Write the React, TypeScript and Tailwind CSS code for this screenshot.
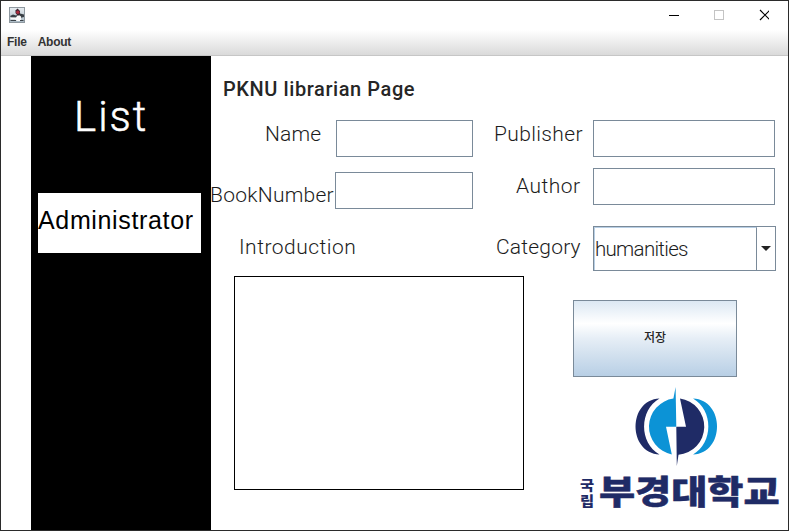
import React from "react";

function JavaIcon() {
  return (
    <svg width="16" height="16" viewBox="0 0 16 16" className="block">
      <defs>
        <linearGradient id="cup" x1="0" y1="0" x2="0" y2="1">
          <stop offset="0" stopColor="#e8edf1" />
          <stop offset="1" stopColor="#a9b8c3" />
        </linearGradient>
      </defs>
      <rect x="0.5" y="0.5" width="15" height="15" fill="url(#cup)" stroke="#8e989f" />
      <path d="M1 9L4 7.5L7 8.5L11 6.5L15 7.5V10L11 11L2 10.500Z" fill="#3a4046" />
      <path d="M1.500 10.500H7L9 7.500L12 9.500V14H8L6 12.500H1.500Z" fill="#fafafa" />
      <path d="M1.500 13.500H7M11 13.500H14.500" stroke="#3b4248" strokeWidth="1" />
      <path d="M8.500 1.500L11 4V7L9 9L6.500 6V3.500Z" fill="#3a2430" />
      <circle cx="8.800" cy="5.200" r="1.700" fill="#a92a3c" />
    </svg>
  );
}

function Label({ className, children }: { className: string; children: React.ReactNode }) {
  return (
    <div className={"shrink-0 whitespace-nowrap font-['Roboto',sans-serif] text-[21px] leading-[28px] font-light text-[#1c1c1c] " + className}>
      {children}
    </div>
  );
}

function Field({ className }: { className: string }) {
  return <input className={"block h-[37px] shrink-0 border border-[#7a8a99] bg-white outline-none " + className} />;
}

function Logo() {
  return (
    <svg width="206" height="132" viewBox="578 384 206 132" className="block overflow-visible">
      <path d="M659.500 398.500C627.500 400 627.500 453 659.500 454.500C639 443 639 410 659.500 398.500Z" fill="#1f2b66" />
      <path d="M693 398.500C725 400 725 453 693 454.500C713.500 443 713.500 410 693 398.500Z" fill="#0c93d6" />
      <path d="M675.600 387L676.300 426.700H666L671.800 454.400A28.300 28.300 0 0 1 673.400 398.600Z" fill="#0c93d6" />
      <path d="M676.300 426.700H686L680 398.600A28.300 28.300 0 0 1 678.500 454.800L676.800 466Z" fill="#1f2b66" />
      <g fill="#1f2b66" className="font-['Noto_Sans_CJK_KR',sans-serif] font-black">
        <g transform="translate(580 490) scale(1.140 1)">
          <text fontSize="13.500">국</text>
        </g>
        <g transform="translate(580 506) scale(1.140 1)">
          <text fontSize="13.500">립</text>
        </g>
        <g transform="translate(599 503.500) scale(1.190 1)" stroke="#1f2b66" strokeWidth="0.500">
          <text fontSize="33">부경대학교</text>
        </g>
      </g>
    </svg>
  );
}

export default function App() {
  return (
    <div className="flex h-[531px] w-[789px] flex-col overflow-hidden border border-[#2b2b2b] bg-white">
      <header className="flex h-[29px] shrink-0 items-start pt-[6px] pl-[8px]">
        <JavaIcon />
        <svg width="104" height="16" viewBox="665 7 104 16" className="mr-[19px] ml-auto block" fill="none" shapeRendering="crispEdges">
          <path d="M669 15.500H679" stroke="#000" />
          <rect x="714.500" y="10.500" width="9" height="9" stroke="#c4c4c4" />
          <path d="M760 10L770 20M770 10L760 20" stroke="#000" shapeRendering="auto" strokeWidth="1.200" />
        </svg>
      </header>
      <nav className="flex h-[26px] shrink-0 gap-[11px] border-b border-[#c6c6c6] bg-linear-to-b from-white to-[#dadada] pt-[4px] pl-[6px] font-['Liberation_Sans',Arial,sans-serif] text-[12px] leading-[16px] font-bold tracking-[-0.250px] text-[#333]">
        <span>File</span>
        <span>About</span>
      </nav>
      <div className="flex min-h-0 flex-1">
        <aside className="ml-[30px] w-[180px] shrink-0 bg-black pt-[34px]">
          <div className="pl-[43px] font-['Roboto',sans-serif] text-[42px] leading-[54px] font-light tracking-[2px] text-white [-webkit-text-stroke:0.500px_white]">List</div>
          <div className="mt-[49px] ml-[7px] h-[60px] w-[163px] bg-white font-['Liberation_Sans',Arial,sans-serif] text-[25px] leading-[54px] tracking-[0.650px] whitespace-nowrap text-black">
            Administrator
          </div>
        </aside>
        <main className="w-[577px] shrink-0">
          <h1 className="h-[64px] pt-[19px] pl-[12px] font-['Roboto',sans-serif] text-[20px] leading-[28px] font-medium tracking-[0.580px] text-[#262626]">
            PKNU librarian Page
          </h1>
          <section className="flex h-[48px] items-start">
            <Label className="ml-[54px] w-[71px] tracking-[0.150px]">Name</Label>
            <Field className="w-[137px]" />
            <Label className="ml-[21px] w-[99px] tracking-[0.350px]">Publisher</Label>
            <Field className="w-[182px]" />
          </section>
          <section className="flex h-[58px] items-start">
            <Label className="mt-[13px] -ml-px w-[125px] tracking-[0.250px]">BookNumber</Label>
            <Field className="mt-[4px] w-[138px]" />
            <Label className="mt-[4px] ml-[43px] w-[77px] tracking-[0.500px]">Author</Label>
            <Field className="w-[182px]" />
          </section>
          <section className="flex h-[50px] items-start">
            <Label className="mt-[7px] ml-[28px] w-[257px] tracking-[0.500px]">Introduction</Label>
            <Label className="mt-[7px] w-[97px] tracking-[0.200px]">Category</Label>
            <div className="flex h-[45px] w-[183px] shrink-0 border border-[#7a8a99]">
              <div className="flex w-[163px] items-center border-t border-r border-l border-t-[#b8cfe5] border-r-[#7a8a99] border-l-[#b8cfe5] font-['Roboto',sans-serif] text-[20.500px] font-light tracking-[-0.700px] text-[#1c1c1c]">
                humanities
              </div>
              <div className="flex flex-1 items-center justify-center">
                <svg width="10" height="5" viewBox="0 0 10 5"><path d="M0 0H10L5 5Z" fill="#222" /></svg>
              </div>
            </div>
          </section>
          <section className="flex items-start">
            <textarea className="ml-[23px] block h-[214px] w-[290px] shrink-0 resize-none border border-black bg-white outline-none" />
            <div className="ml-[49px] flex flex-col pt-[24px]">
              <button className="h-[77px] w-[164px] border border-[#7a8a99] bg-[linear-gradient(to_bottom,#dce8f3_0%,#ffffff_30%,#e6eef6_50%,#b8cfe5_100%)] pb-[3px] font-['Noto_Sans_CJK_KR',sans-serif] text-[12px] font-medium text-[#262626]">
                저장
              </button>
              <div className="mt-[7px] ml-[5px]">
                <Logo />
              </div>
            </div>
          </section>
        </main>
      </div>
    </div>
  );
}
